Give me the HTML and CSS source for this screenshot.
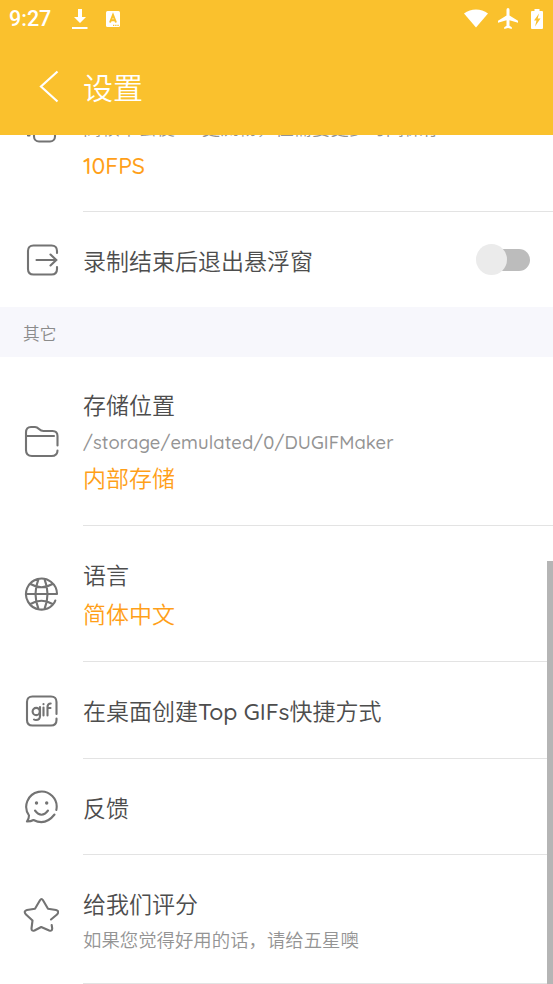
FILE: index.html
```html
<!DOCTYPE html>
<html lang="zh-CN">
<head>
<meta charset="utf-8">
<title>设置</title>
<link rel="stylesheet" href="styles.css">
</head>
<body>
<header class="top">
  <div class="status">
    <span class="clock">9:27</span>
    <svg class="download" width="16" height="22" viewBox="0 0 16 22"><path d="M6 1h4v8h4l-6 6-6-6h4zM0 19h15.500v2H0z" fill="#fff"/></svg>
    <svg class="badge" width="14" height="16" viewBox="0 0 14 16"><rect width="14" height="16" rx="1.500" fill="#fff"/><path d="M4 11.500 7 4l3 7.500M5 9.300h4" fill="none" stroke="#fac12d" stroke-width="2"/><path d="M7 14.300h6" stroke="#fac12d" stroke-width="1.300" stroke-dasharray="1.300 .9"/></svg>
    <svg class="wifi" width="24" height="19" viewBox="0 0 24 19"><path d="M0 4.500C7-1 17-1 24 4.500L12 18.500z" fill="#fff"/></svg>
    <svg class="plane" width="20" height="21" viewBox="0 0 20 21"><path d="M10 0Q8.500 0 8.500 1.700V7.500L0 12.800v2l8.500-2.600V17.700l-2.300 1.600V21l3.800-1.100 3.800 1.100v-1.700l-2.300-1.600v-5.500l8.500 2.600v-2l-8.500-5.300V1.700Q11.500 0 10 0z" fill="#fff"/></svg>
    <svg class="battery" width="12" height="20" viewBox="0 0 12 20"><path d="M3.500 0h5v2H11q1 0 1 1v16q0 1-1 1H1q-1 0-1-1V3q0-1 1-1h2.500z" fill="#fff"/><path d="M8 4.500 3 11.500h2.500l-1.500 6L9.500 9.500H6.700z" fill="#fac12d"/></svg>
  </div>
  <div class="bar">
    <svg class="back" width="20" height="33" viewBox="0 0 20 33"><path d="M18.500 1.500 2 16.500l16.500 15" fill="none" stroke="#fff" stroke-width="2.200"/></svg>
    <h1>设置</h1>
  </div>
</header>
<main class="list">
  <section class="row fps">
    <div class="icon"><svg width="36" height="36" viewBox="0 0 36 36"><rect x="11" y="4" width="21" height="28.500" rx="5"/><path d="M5 26.500h1.500"/></svg></div>
    <div class="content"><p class="note">高帧率会使<span class="latin gap">GIF</span>更流畅，但需要更多时间保存</p><p class="value latin fpsvalue">10FPS</p></div>
  </section>
  <section class="row exit">
    <div class="icon"><svg width="36" height="36" viewBox="0 0 36 36"><path d="M34 11V9q0-5.500-5.500-5.500h-18Q5 3.500 5 9v18q0 5.500 5.500 5.500h18Q34 32.500 34 27v-2M13.500 18h20M27.500 12.500l5.800 5.500-5.800 5.500"/></svg></div>
    <div class="content"><h2>录制结束后退出悬浮窗</h2></div>
    <div class="switch"><span class="knob"></span></div>
  </section>
  <h3 class="group">其它</h3>
  <section class="row storage">
    <div class="icon"><svg width="36" height="36" viewBox="0 0 36 36"><path d="M34.500 21.500V12q0-5-5-5H20.500Q18 7 16 5T12 3H8Q3 3 3 8.500v17.500q0 6 6 6h19.500q6 0 6-5.500M3 12h28"/></svg></div>
    <div class="content"><h2>存储位置</h2><p class="note latin path">/storage/emulated/0/DUGIFMaker</p><p class="value">内部存储</p></div>
  </section>
  <section class="row language">
    <div class="icon"><svg width="36" height="36" viewBox="0 0 36 36"><path d="M34 18A15.500 15.500 0 1 0 29.500 29Q31.700 27 32.300 24.500M3 18h31M7.500 8q11 6.500 22 0M7.500 28q11-6.500 22 0M15.500 3q-6 15 0 30M21.500 3q6 15 0 30"/></svg></div>
    <div class="content"><h2>语言</h2><p class="value">简体中文</p></div>
  </section>
  <section class="row shortcut">
    <div class="icon"><svg width="36" height="36" viewBox="0 0 36 36"><path d="M33.500 21V9q0-5.500-5.500-5.500H9.500Q4 3.500 4 9v18q0 5.500 5.500 5.500H28q5.500 0 5.500-5.500v-1.500"/><circle cx="13.200" cy="18.500" r="3.600"/><path d="M17 14v9q0 4-4 4-1.300 0-2-.5M20.500 14.500v8M20.500 11v.3M24.500 22.500v-8.500q0-3.500 3.200-3.500M24.500 15h3"/></svg></div>
    <div class="content"><h2>在桌面创建<span class="latin top-gifs">Top GIFs</span>快捷方式</h2></div>
  </section>
  <section class="row feedback">
    <div class="icon"><svg width="36" height="36" viewBox="0 0 36 36"><path d="M33.300 21A15.200 15.200 0 1 0 6 26.500Q6 30 4 32.500q4 0 6.500-1.500 12 6 21-5.500"/><path d="M12 21.500q6.500 8.500 13 0"/><g class="eyes"><circle cx="13.500" cy="14" r="1.700"/><circle cx="23.700" cy="14" r="1.700"/></g></svg></div>
    <div class="content"><h2>反馈</h2></div>
  </section>
  <section class="row rating">
    <div class="icon"><svg width="36" height="36" viewBox="0 0 36 36"><path d="M28 23.500 34 18.500q3-3.500-1-4.500l-8-1.300-5-8.500q-1.500-2.500-3 0L12 12.700 4 14q-4 1-1 4.500l6.500 6-1 8q0 3 3 2l6.700-3.500 8 3.500q3 1 3-2l-.5-3.500"/></svg></div>
    <div class="content"><h2>给我们评分</h2><p class="note">如果您觉得好用的话，请给五星噢</p></div>
  </section>
</main>
<div class="scrollbar"></div>
</body>
</html>
```
FILE: styles.css
```css
* { box-sizing: border-box; }
body {
  margin: 0;
  height: 984px;
  overflow: hidden;
  background: #fff;
  color: #4d4d4d;
  font-family: "Noto Sans CJK SC", sans-serif;
}
h1, h2, h3, p { margin: 0; font-weight: 350; }
svg { display: block; flex: none; }
.top { height: 135px; background: #fac12d; color: #fff; }
.status { display: flex; align-items: center; height: 37px; padding: 0 9px; }
.clock { width: 44px; font: 500 21.5px/38px Roboto, sans-serif; white-space: nowrap; padding-top: 1px; }
.download { margin-left: 19px; }
.badge { margin-left: 18px; }
.wifi { margin-left: auto; }
.plane { margin-left: 10px; }
.battery { margin: 0 1px 0 13px; }
.bar { display: flex; align-items: center; height: 98px; padding-left: 39px; }
.back { margin-right: 24px; }
h1 { font-size: 30px; line-height: 40px; }
.list { height: 849px; overflow: hidden; }
.row { display: flex; position: relative; }
.row:not(.exit)::after {
  content: "";
  position: absolute;
  left: 83px;
  right: 0;
  bottom: 0;
  height: 1px;
  background: #e3e3e3;
}
.icon { width: 83px; padding-left: 23px; align-self: center; flex: none; }
.icon svg { fill: none; stroke: #737373; stroke-width: 2.1; stroke-linecap: round; stroke-linejoin: round; }
.icon .eyes { fill: #737373; stroke: none; }
.content { flex: 1; white-space: nowrap; }
h2, .value { font-size: 23px; line-height: 34px; }
.value { color: #ff9f19; }
.note { color: #949494; font-size: 18.4px; line-height: 28px; }
.latin { font-family: Quicksand, Lato, sans-serif; font-weight: 550; }
.gap { letter-spacing: -.4px; }
.path { letter-spacing: .1px; }
.fps { height: 77px; }
.fps .icon { align-self: flex-start; margin-top: -26px; }
.fps .content { margin-top: -22px; }
.value.fpsvalue { margin-top: 6px; letter-spacing: -.1px; }
.exit { height: 95px; align-items: center; }
.switch { position: relative; width: 52px; height: 22px; margin-right: 23px; border-radius: 11px; background: #bcbcbc; }
.knob { position: absolute; left: -2px; top: -5px; width: 31px; height: 31px; border-radius: 50%; background: #ebebeb; }
.group { height: 50px; padding-left: 23px; background: #f7f7fc; color: #8b8b8b; font-size: 16.700px; line-height: 52px; }
.storage { height: 169px; }
.storage .content { padding-top: 30px; }
.path { margin-top: 8px; }
.storage .value { margin-top: 3px; }
.language { height: 136px; }
.language .content { padding-top: 31px; }
.language .value { margin-top: 5px; }
.shortcut { height: 97px; align-items: center; }
.feedback { height: 96px; align-items: center; }
.rating { height: 129px; }
.rating .icon { padding-bottom: 11px; }
.rating .content { padding-top: 31px; }
.rating .note { margin-top: 5px; }
.scrollbar { position: fixed; right: 0; top: 561px; bottom: 0; width: 6px; background: #b5b5b5; }
```
